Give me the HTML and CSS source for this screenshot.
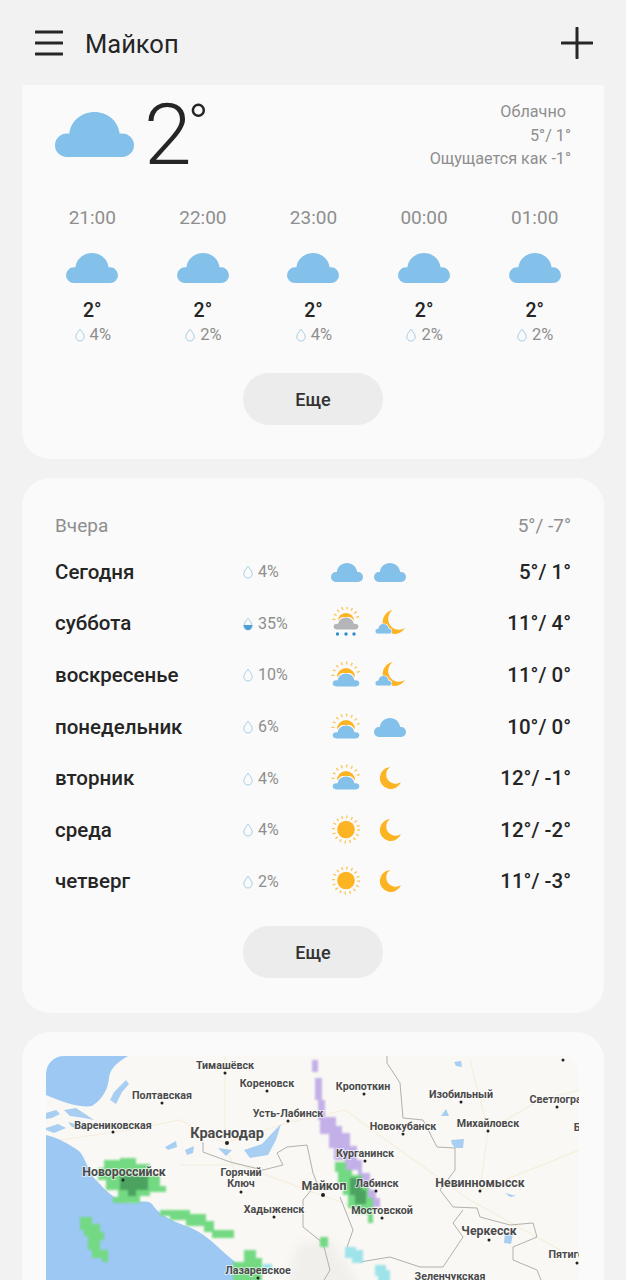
FILE: index.html
```html
<!DOCTYPE html>
<html lang="ru">
<head>
  <meta charset="UTF-8" />
  <meta name="viewport" content="width=device-width, initial-scale=1.0" />
  <title>Погода - Майкоп</title>
  <link rel="stylesheet" href="styles.css">
</head>
<body>
  <!-- shared weather icons -->
  <svg class="defs" width="0" height="0">
    <defs>
      <symbol id="cloud" viewBox="0 0 80 46" preserveAspectRatio="none">
        <path d="M12 46a12 12 0 0 1 0-24h2.500C16 9 27 0 40 0s24 9 25.500 22H68a12 12 0 0 1 0 24z"/>
      </symbol>
      <symbol id="drop" viewBox="0 0 12 14">
        <path d="M6 1.200C4.500 3.500 1.800 6 1.800 8.800a4.200 4.200 0 0 0 8.400 0C10.200 6 7.500 3.500 6 1.200z" fill="none" stroke="#a5cfe4" stroke-width="1"/>
      </symbol>
      <symbol id="drop-half" viewBox="0 0 12 14">
        <path d="M6 1.200C4.500 3.500 1.800 6 1.800 8.800a4.200 4.200 0 0 0 8.400 0C10.200 6 7.500 3.500 6 1.200z" fill="none" stroke="#a5cfe4" stroke-width="1"/>
        <path d="M1.800 8h8.400v.800a4.200 4.200 0 0 1-8.400 0z" fill="#4d9fd8"/>
      </symbol>
      <symbol id="moon" viewBox="0 0 32 32">
        <path d="M16 5A11 11 0 1 0 27 20A9.200 9.200 0 0 1 16 5z" fill="#fdb422"/>
      </symbol>
      <symbol id="moon-cloud" viewBox="0 0 32 32">
        <path d="M19 3A12 12 0 1 0 31 21A10 10 0 0 1 19 3z" fill="#fdb422"/>
        <use href="#cloud" x="1" y="16.500" width="17" height="10.500" fill="#84c1ea" stroke="#fafafa" stroke-width="4"/>
      </symbol>
      <symbol id="sun" viewBox="0 0 32 32">
        <circle cx="15" cy="15.500" r="12.500" fill="none" stroke="#fdc44f" stroke-width="3" stroke-dasharray="1.300 3.610"/>
        <circle cx="15" cy="15.500" r="8.800" fill="#fdb422"/>
      </symbol>
      <symbol id="sun-cloud" viewBox="0 0 32 32">
        <path d="M2 17A13 13 0 0 1 28 17" fill="none" stroke="#fdc44f" stroke-width="3" stroke-dasharray="1.300 3.800"/>
        <path d="M6 18A9 9 0 0 1 24 18z" fill="#fdb422"/>
        <use href="#cloud" x="1" y="14" width="28" height="14" fill="#84c1ea" stroke="#fafafa" stroke-width="4"/>
      </symbol>
      <symbol id="sun-rain" viewBox="0 0 32 32">
        <path d="M3 13A12 12 0 0 1 27 13" fill="none" stroke="#fdc44f" stroke-width="3" stroke-dasharray="1.300 3.500"/>
        <path d="M7 14A8 8 0 0 1 23 14z" fill="#fdb422"/>
        <use href="#cloud" x="2" y="10" width="26" height="13" fill="#b3b5b8" stroke="#fafafa" stroke-width="4"/>
        <circle cx="6.500" cy="27" r="1.700" fill="#2b8fd0"/>
        <circle cx="15" cy="27" r="1.700" fill="#2b8fd0"/>
        <circle cx="23" cy="27" r="1.700" fill="#2b8fd0"/>
      </symbol>
    </defs>
  </svg>

  <header class="topbar">
    <svg class="menu-icon" viewBox="0 0 28 28" aria-label="Меню">
      <path d="M1 3h26M1 14h26M1 25h26" stroke="#262626" stroke-width="3" stroke-linecap="round"/>
    </svg>
    <h1 class="city">Майкоп</h1>
    <svg class="add-icon" viewBox="0 0 32 32" aria-label="Добавить">
      <path d="M16 1v30M1 16h30" stroke="#262626" stroke-width="3" stroke-linecap="round"/>
    </svg>
  </header>

  <section class="card card-now">
    <div class="now">
      <svg class="now-icon"><use href="#cloud"/></svg>
      <div class="now-temp">2<span class="now-deg">°</span></div>
      <div class="now-info">
        <div class="now-status">Облачно</div>
        <div>5°/ 1°</div>
        <div>Ощущается как -1°</div>
      </div>
    </div>

    <div class="hours">
      <div class="hour">
        <div class="hour-time">21:00</div>
        <svg class="hour-icon"><use href="#cloud"/></svg>
        <div class="hour-temp">2°</div>
        <div class="rain"><svg class="drop"><use href="#drop"/></svg>4%</div>
      </div>
      <div class="hour">
        <div class="hour-time">22:00</div>
        <svg class="hour-icon"><use href="#cloud"/></svg>
        <div class="hour-temp">2°</div>
        <div class="rain"><svg class="drop"><use href="#drop"/></svg>2%</div>
      </div>
      <div class="hour">
        <div class="hour-time">23:00</div>
        <svg class="hour-icon"><use href="#cloud"/></svg>
        <div class="hour-temp">2°</div>
        <div class="rain"><svg class="drop"><use href="#drop"/></svg>4%</div>
      </div>
      <div class="hour">
        <div class="hour-time">00:00</div>
        <svg class="hour-icon"><use href="#cloud"/></svg>
        <div class="hour-temp">2°</div>
        <div class="rain"><svg class="drop"><use href="#drop"/></svg>2%</div>
      </div>
      <div class="hour">
        <div class="hour-time">01:00</div>
        <svg class="hour-icon"><use href="#cloud"/></svg>
        <div class="hour-temp">2°</div>
        <div class="rain"><svg class="drop"><use href="#drop"/></svg>2%</div>
      </div>
    </div>

    <button class="more">Еще</button>
  </section>

  <section class="card card-days">
    <div class="yesterday">
      <span>Вчера</span>
      <span>5°/ -7°</span>
    </div>

    <div class="day">
      <div class="day-name">Сегодня</div>
      <div class="rain day-rain"><svg class="drop"><use href="#drop"/></svg>4%</div>
      <svg class="day-icon cloud-icon"><use href="#cloud" y="7" height="19"/></svg>
      <svg class="day-icon cloud-icon"><use href="#cloud" y="7" height="19"/></svg>
      <div class="day-temp">5°/ 1°</div>
    </div>
    <div class="day">
      <div class="day-name">суббота</div>
      <div class="rain day-rain"><svg class="drop"><use href="#drop-half"/></svg>35%</div>
      <svg class="day-icon"><use href="#sun-rain"/></svg>
      <svg class="day-icon"><use href="#moon-cloud"/></svg>
      <div class="day-temp">11°/ 4°</div>
    </div>
    <div class="day">
      <div class="day-name">воскресенье</div>
      <div class="rain day-rain"><svg class="drop"><use href="#drop"/></svg>10%</div>
      <svg class="day-icon"><use href="#sun-cloud"/></svg>
      <svg class="day-icon"><use href="#moon-cloud"/></svg>
      <div class="day-temp">11°/ 0°</div>
    </div>
    <div class="day">
      <div class="day-name">понедельник</div>
      <div class="rain day-rain"><svg class="drop"><use href="#drop"/></svg>6%</div>
      <svg class="day-icon"><use href="#sun-cloud"/></svg>
      <svg class="day-icon cloud-icon"><use href="#cloud" y="7" height="19"/></svg>
      <div class="day-temp">10°/ 0°</div>
    </div>
    <div class="day">
      <div class="day-name">вторник</div>
      <div class="rain day-rain"><svg class="drop"><use href="#drop"/></svg>4%</div>
      <svg class="day-icon"><use href="#sun-cloud"/></svg>
      <svg class="day-icon"><use href="#moon"/></svg>
      <div class="day-temp">12°/ -1°</div>
    </div>
    <div class="day">
      <div class="day-name">среда</div>
      <div class="rain day-rain"><svg class="drop"><use href="#drop"/></svg>4%</div>
      <svg class="day-icon"><use href="#sun"/></svg>
      <svg class="day-icon"><use href="#moon"/></svg>
      <div class="day-temp">12°/ -2°</div>
    </div>
    <div class="day">
      <div class="day-name">четверг</div>
      <div class="rain day-rain"><svg class="drop"><use href="#drop"/></svg>2%</div>
      <svg class="day-icon"><use href="#sun"/></svg>
      <svg class="day-icon"><use href="#moon"/></svg>
      <div class="day-temp">11°/ -3°</div>
    </div>

    <button class="more">Еще</button>
  </section>

  <section class="card card-map">
    <!-- viewBox uses page coordinates so the places are easy to read off -->
    <svg class="map" viewBox="46 1056 533 248">
      <rect class="land" x="46" y="1056" width="533" height="248"/>

      <!-- roads -->
      <path class="road" d="M60 1140L130 1130L180 1120L225 1143L290 1122L345 1110L400 1150L470 1200L560 1250M225 1056L225 1143L241 1190M180 1165L240 1165L320 1195L380 1215M470 1060L488 1130L540 1100L579 1090M488 1130L480 1190L579 1150"/>

      <!-- sea and lakes -->
      <path class="water" d="M46 1056H128C118 1062 110 1068 109 1078C108 1088 104 1098 92 1106C80 1108 62 1102 46 1095z"/>
      <path class="water" d="M46 1135C58 1138 70 1144 80 1152C86 1160 88 1170 94 1178C102 1186 110 1196 120 1200C132 1206 146 1198 152 1204C158 1214 170 1220 186 1226C204 1232 214 1244 228 1256C240 1266 250 1274 258 1304H46z"/>
      <path class="lake" d="M46 1113L56 1110L60 1114L52 1118L46 1119zM64 1110L76 1108L88 1116L94 1120L84 1118L70 1116zM46 1128L58 1124L66 1128L54 1133L46 1130zM68 1122L82 1126L92 1128L84 1130L72 1127z"/>
      <path class="lake" d="M110 1100L114 1092L120 1086L126 1080L129 1084L122 1092L116 1104zM165 1147L176 1141L177 1147L168 1150zM185 1150L194 1146L193 1153L187 1155zM244 1150L262 1144L275 1130L281 1124L276 1140L268 1155L250 1158zM218 1148L232 1150L226 1156z"/>
      <path class="lake" d="M454 1062L461 1061L462 1067L456 1066zM441 1116L446 1109L449 1116zM451 1140L464 1139L463 1148L455 1148L452 1144zM505 1231L513 1234L511 1244L504 1243zM505 1193L516 1196L510 1197z"/>

      <!-- mountains -->
      <path class="hills" d="M298 1245L330 1238L345 1262L370 1304H280z"/>

      <!-- borders -->
      <path class="border" d="M203 1142L203 1152L230 1162L263 1170L283 1165L277 1153L287 1147L307 1145L313 1173L317 1183L303 1200L303 1227L323 1243L330 1270L310 1304"/>
      <path class="border" d="M387 1056L387 1063L400 1083L403 1118L423 1120L437 1147L455 1148L455 1170L440 1190L453 1207L477 1208L480 1217L510 1225L533 1223L537 1237L513 1247L513 1260L537 1270L545 1290"/>
      <path class="border" d="M340 1197L353 1230L347 1247L360 1262L390 1257L420 1267L443 1267L463 1237L453 1223L463 1210"/>

      <!-- rain radar -->
      <g class="radar">
        <path class="snow" d="M312 1060H318V1072H312zM315 1078H322V1100H325V1117H336V1126H342V1133H350V1146H357V1160H362V1173H370V1190H376V1198H380V1207H368V1190H358V1170H345V1160H334V1148H329V1134H320V1120H318V1100H315z"/>
        <path class="rain-light" d="M335 1162H346V1170H352V1175H362V1186H368V1198H373V1223H368V1214H356V1208H348V1195H343V1184H338V1172H335z"/>
        <path class="rain-mid" d="M350 1178H362V1190H366V1204H355V1195H350z"/>
        <path class="rain-light" d="M104 1160H120V1158H136V1164H150V1175H160V1186H166V1192H150V1196H140V1203H113V1197H118V1190H106V1180H98V1168H104z"/>
        <path class="rain-mid" d="M120 1176H148V1190H136V1196H128V1190H120z"/>
        <path class="rain-light" d="M160 1210H190V1214H206V1221H214V1230H234V1238H212V1232H204V1226H186V1220H170V1216H160z"/>
        <path class="rain-light" d="M80 1217H92V1224H100V1232H104V1240H100V1250H108V1262H102V1258H92V1250H88V1236H84V1230H80z"/>
        <path class="rain-light" d="M233 1262H244V1250H256V1258H262V1304H233z"/>
        <path class="rain-light" d="M320 1237H328V1247H320z"/>
        <path class="ice" d="M263 1264H272V1272H263zM345 1247H356V1250H363V1263H352V1258H345zM375 1265H386V1270H390V1304H378V1276H375z"/>
      </g>

      <!-- towns -->
      <g class="towns">
        <circle cx="225" cy="1073" r="1.500"/><circle cx="267" cy="1091" r="1.500"/>
        <circle cx="162" cy="1103" r="1.500"/><circle cx="288" cy="1121" r="1.500"/>
        <circle cx="113" cy="1132" r="1.500"/><circle cx="227" cy="1143" r="2"/>
        <circle cx="123" cy="1180" r="1.500"/><circle cx="241" cy="1192" r="1.500"/>
        <circle cx="323" cy="1195" r="2"/><circle cx="274" cy="1217" r="1.500"/>
        <circle cx="258" cy="1278" r="1.500"/><circle cx="364" cy="1094" r="1.500"/>
        <circle cx="461" cy="1102" r="1.500"/><circle cx="557" cy="1107" r="1.500"/>
        <circle cx="403" cy="1134" r="1.500"/><circle cx="488" cy="1131" r="1.500"/>
        <circle cx="365" cy="1161" r="1.500"/><circle cx="376" cy="1191" r="1.500"/>
        <circle cx="480" cy="1191" r="1.500"/><circle cx="382" cy="1218" r="1.500"/>
        <circle cx="489" cy="1240" r="1.500"/><circle cx="577" cy="1263" r="1.500"/>
        <circle cx="563" cy="1060" r="1.500"/>
      </g>

      <g class="labels">
        <text x="225" y="1069">Тимашёвск</text>
        <text x="267" y="1087">Кореновск</text>
        <text x="162" y="1099">Полтавская</text>
        <text x="288" y="1117">Усть-Лабинск</text>
        <text x="113" y="1129">Варениковская</text>
        <text class="label-big" x="227" y="1138">Краснодар</text>
        <text class="label-mid" x="124" y="1176">Новороссийск</text>
        <text x="241" y="1176">Горячий</text>
        <text x="241" y="1187">Ключ</text>
        <text class="label-mid" x="324" y="1190">Майкоп</text>
        <text x="274" y="1213">Хадыженск</text>
        <text x="258" y="1274">Лазаревское</text>
        <text x="363" y="1090">Кропоткин</text>
        <text x="461" y="1098">Изобильный</text>
        <text x="559" y="1103">Светлоград</text>
        <text x="403" y="1130">Новокубанск</text>
        <text x="488" y="1127">Михайловск</text>
        <text x="577" y="1131">Б</text>
        <text x="365" y="1157">Курганинск</text>
        <text x="377" y="1187">Лабинск</text>
        <text class="label-mid" x="480" y="1187">Невинномысск</text>
        <text x="382" y="1214">Мостовской</text>
        <text class="label-mid" x="489" y="1235">Черкесск</text>
        <text x="575" y="1258">Пятигорск</text>
        <text x="450" y="1280">Зеленчукская</text>
      </g>
    </svg>
  </section>
</body>
</html>
```
FILE: styles.css
```css
html, body {
  height: 1280px;
  overflow: hidden;
}

body {
  margin: 0;
  background-color: #f2f2f2;
  font-family: Roboto, 'Noto Sans', sans-serif;
  color: #252525;
}

.defs {
  position: absolute;
}

.topbar {
  display: flex;
  align-items: center;
  height: 85px;
  padding: 0 33px 0 35px;
  box-sizing: border-box;
}

.menu-icon {
  width: 28px;
  height: 28px;
}

.city {
  margin: 2px 0 0 22px;
  font-size: 25.500px;
  font-weight: 400;
  flex: 1;
}

.add-icon {
  width: 32px;
  height: 32px;
}

.card {
  margin: 0 22px 19px;
  background-color: #fafafa;
  border-radius: 28px;
}

.card-now {
  border-radius: 0 0 28px 28px;
  height: 374px;
  padding: 0 33px;
  box-sizing: border-box;
}

.now {
  display: flex;
  height: 120px;
  padding-top: 27px;
  box-sizing: border-box;
}

.now-icon {
  width: 79px;
  height: 45px;
  fill: #84c1ea;
}

.now-temp {
  margin: -20px 0 0 10px;
  font-size: 86px;
  font-weight: 300;
  line-height: 86px;
  letter-spacing: -4px;
  flex: 1;
}

.now-deg {
  font-size: 56px;
  line-height: 0;
  letter-spacing: 0;
  vertical-align: 20px;
}

.now-info {
  margin-top: -12px;
  text-align: right;
  font-size: 16.200px;
  line-height: 23.500px;
  color: #8e8e8e;
}

.now-status {
  padding-right: 5px;
}

.hours {
  display: grid;
  grid-template-columns: repeat(5, 110.600px);
  margin-left: -18px;
}

.hour {
  display: flex;
  flex-direction: column;
  align-items: center;
}

.hour-time {
  font-size: 19px;
  line-height: 25px;
  color: #8e8e8e;
}

.hour-icon {
  width: 52px;
  height: 30px;
  margin-top: 23px;
  fill: #84c1ea;
}

.hour-temp {
  margin-top: 15px;
  font-size: 19.500px;
  font-weight: 500;
  line-height: 26px;
}

.rain {
  display: flex;
  align-items: center;
  font-size: 16px;
  line-height: 20px;
  color: #8e8e8e;
}

.hour .rain {
  margin-top: 1px;
  font-size: 16.500px;
}

.drop {
  width: 12px;
  height: 14px;
  margin-right: 4px;
}

.more {
  display: block;
  width: 140px;
  height: 52px;
  margin: 28px auto 0;
  border: none;
  border-radius: 26px;
  background-color: #ececec;
  color: #333;
  font-family: inherit;
  font-size: 18px;
  font-weight: 500;
}

.card-days {
  height: 535px;
  padding: 36px 33px 0;
  box-sizing: border-box;
}

.yesterday {
  display: flex;
  justify-content: space-between;
  height: 24px;
  margin-bottom: 8px;
  font-size: 19px;
  line-height: 24px;
  color: #8e8e8e;
}

.day {
  display: grid;
  grid-template-columns: 187px 89px 32px 32px 1fr;
  align-items: center;
  height: 51.600px;
}

.day-name {
  font-size: 20.500px;
  font-weight: 500;
}

.day-rain {
  padding-top: 1px;
}

.day-icon {
  width: 32px;
  height: 32px;
  margin-left: 11px;
  fill: #84c1ea;
}

.day-icon:nth-child(3) {
  margin-left: 0;
}

.day-temp {
  font-size: 20.500px;
  font-weight: 500;
  text-align: right;
}

.card-days .more {
  margin-top: 19px;
}

.card-map {
  padding: 24px;
  height: 300px;
  box-sizing: border-box;
}

.map {
  display: block;
  width: 533px;
  height: 248px;
  border-radius: 18px;
}

.land {
  fill: #faf8f4;
}

.water {
  fill: #9cc8f3;
}

.lake {
  fill: #a8cef2;
}

.road {
  fill: none;
  stroke: #f6eedd;
  stroke-width: 1.200;
}

.hills {
  fill: #f0efec;
  filter: blur(4px);
}

.border {
  fill: none;
  stroke: #b0b0ad;
  stroke-width: 1;
}

.radar {
  filter: blur(0.800px);
}

.snow {
  fill: #c3b0e8;
}

.rain-light {
  fill: #73d983;
}

.rain-mid {
  fill: #4ba35f;
}

.ice {
  fill: #9fe3ea;
}

.towns {
  fill: #222;
}

.labels text {
  font-size: 10.700px;
  font-weight: 700;
  fill: #4a4a4a;
  text-anchor: middle;
  paint-order: stroke;
  stroke: rgba(255, 255, 255, 0.6);
  stroke-width: 2px;
}

.labels .label-mid {
  font-size: 12.300px;
}

.labels .label-big {
  font-size: 14.500px;
}
```
